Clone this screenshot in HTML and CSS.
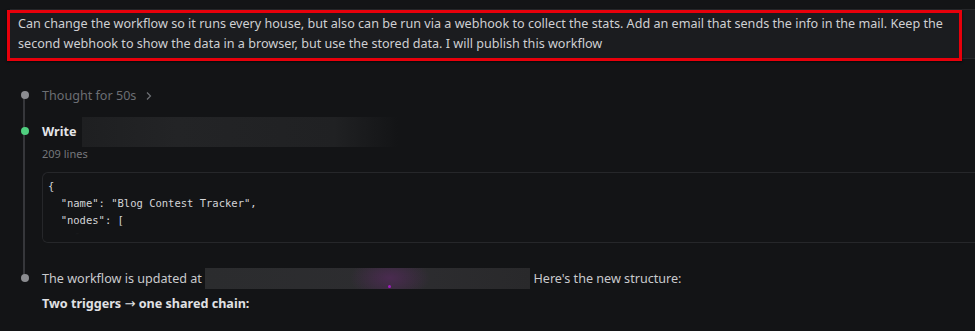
FILE: index.html
```html
<!DOCTYPE html>
<html lang="en">
<head>
<meta charset="utf-8">
<title>Workflow chat</title>
<link rel="stylesheet" href="styles.css">
</head>
<body>
  <div class="page">
    <div class="msg">
      <p class="msg-text">Can change the workflow so it runs every house, but also can be run via a webhook to collect the stats. Add an email that sends the info in the mail. Keep the second webhook to show the data in a browser, but use the stored data. I will publish this workflow</p>
      <div class="highlight"></div>
    </div>

    <div class="timeline">
      <div class="rail"></div>

      <div class="item item-thought">
        <span class="dot dot-gray"></span>
        <span class="thought">Thought for 50s</span>
        <svg class="chev" width="8" height="10" viewBox="0 0 8 10"><path d="M2 1.5 L5.5 5 L2 8.5" fill="none" stroke="#6e7075" stroke-width="1.2"/></svg>
      </div>

      <div class="item item-write">
        <span class="dot dot-green"></span>
        <div class="write-row"><span class="write">Write</span><span class="redact redact-path"></span></div>
        <div class="lines">209 lines</div>
        <div class="code">
<pre>{
  "name": "Blog Contest Tracker",
  "nodes": [
    {</pre>
          <div class="fade"></div>
        </div>
      </div>

      <div class="item item-final">
        <span class="dot dot-gray"></span>
        <p class="para">The workflow is updated at <span class="redact redact-url"><span class="speck"></span></span> Here's the new structure:</p>
        <p class="para bold">Two triggers <span class="arrow">→</span> one shared chain:</p>
      </div>
    </div>
  </div>
</body>
</html>
```

FILE: styles.css
```css
* { box-sizing: border-box; }

html, body {
  margin: 0;
  padding: 0;
  background: #131416;
  overflow: hidden;
}

body {
  font-family: "Noto Sans", "Open Sans", sans-serif;
  font-size: 12.6px;
  color: #c9cacd;
  width: 975px;
  height: 331px;
}

.page {
  position: relative;
  width: 975px;
  height: 331px;
}

.msg {
  position: relative;
  margin: 9px 0 0 10px;
  width: 990px;
  background: #1b1c1f;
  border-top: 1px solid #26272a;
  border-bottom: 1px solid #26272a;
  padding: 4px 8px;
}

.msg-text {
  margin: 0;
  width: 940px;
  line-height: 20px;
  color: #cfd0d3;
}

.highlight {
  position: absolute;
  left: -3px;
  top: 0px;
  width: 955px;
  height: 51px;
  border: 3px solid #e8000b;
  box-shadow: 0 1px 2px rgba(0,0,0,0.6);
  pointer-events: none;
}

.timeline {
  position: relative;
  padding-left: 42px;
  margin-top: 27px;
}

.rail {
  position: absolute;
  left: 23px;
  top: 10px;
  height: 183px;
  width: 2px;
  background: #36373b;
}

.item {
  position: relative;
}

.dot {
  position: absolute;
  left: -21px;
  top: 5px;
  width: 8px;
  height: 8px;
  border-radius: 50%;
}

.dot-gray { background: #8b8c90; }
.dot-green { background: #4fcf7f; }

.item-thought {
  display: flex;
  align-items: center;
  gap: 9px;
  height: 20px;
  line-height: 20px;
}

.thought { color: #6c6e73; }

.chev { display: block; }

.item-write {
  margin-top: 16px;
}

.write-row {
  display: flex;
  align-items: center;
  height: 20px;
}

.write {
  font-weight: 700;
  color: #e4e5e8;
  line-height: 20px;
}

.redact-path {
  display: block;
  margin-left: 6px;
  width: 316px;
  height: 30px;
  background: linear-gradient(90deg, #1e1f21 0%, #232426 30%, #202123 80%, rgba(28,29,31,0) 100%);
}

.lines {
  margin-top: 4px;
  font-size: 11px;
  line-height: 16px;
  color: #75777b;
}

.code {
  position: relative;
  margin-top: 10px;
  height: 71px;
  border: 1px solid #26272a;
  border-right: none;
  border-radius: 6px 0 0 6px;
  overflow: hidden;
  background: #131416;
}

.code pre {
  margin: 0;
  padding: 5px 5px;
  font-family: "DejaVu Sans Mono", "Liberation Mono", monospace;
  font-size: 10.5px;
  line-height: 17px;
  color: #d4d5d8;
}

.fade {
  position: absolute;
  left: 0;
  right: 0;
  bottom: 0;
  height: 14px;
  background: linear-gradient(180deg, rgba(19,20,22,0.85) 0%, #131416 50%);
}

.item-final {
  margin-top: 26px;
}

.para {
  margin: 0;
  line-height: 20px;
  color: #c9cacd;
}

.para + .para { margin-top: 5px; }

.bold {
  font-weight: 700;
  color: #e0e1e4;
}

.arrow {
  font-family: "DejaVu Sans", sans-serif;
  font-weight: 400;
  font-size: 13px;
}

.redact-url {
  position: relative;
  display: inline-block;
  vertical-align: middle;
  width: 325px;
  height: 21px;
  margin: -4px 0 -2px;
  background:
    radial-gradient(ellipse 40px 22px at 185px 10px, rgba(110,40,120,0.45), rgba(110,40,120,0) 100%),
    linear-gradient(90deg, #2b2c2e 0%, #2d2d30 60%, #29292b 100%);
}

.speck {
  position: absolute;
  left: 183px;
  top: 17px;
  width: 3px;
  height: 3px;
  border-radius: 50%;
  background: #a01cc0;
}
```
